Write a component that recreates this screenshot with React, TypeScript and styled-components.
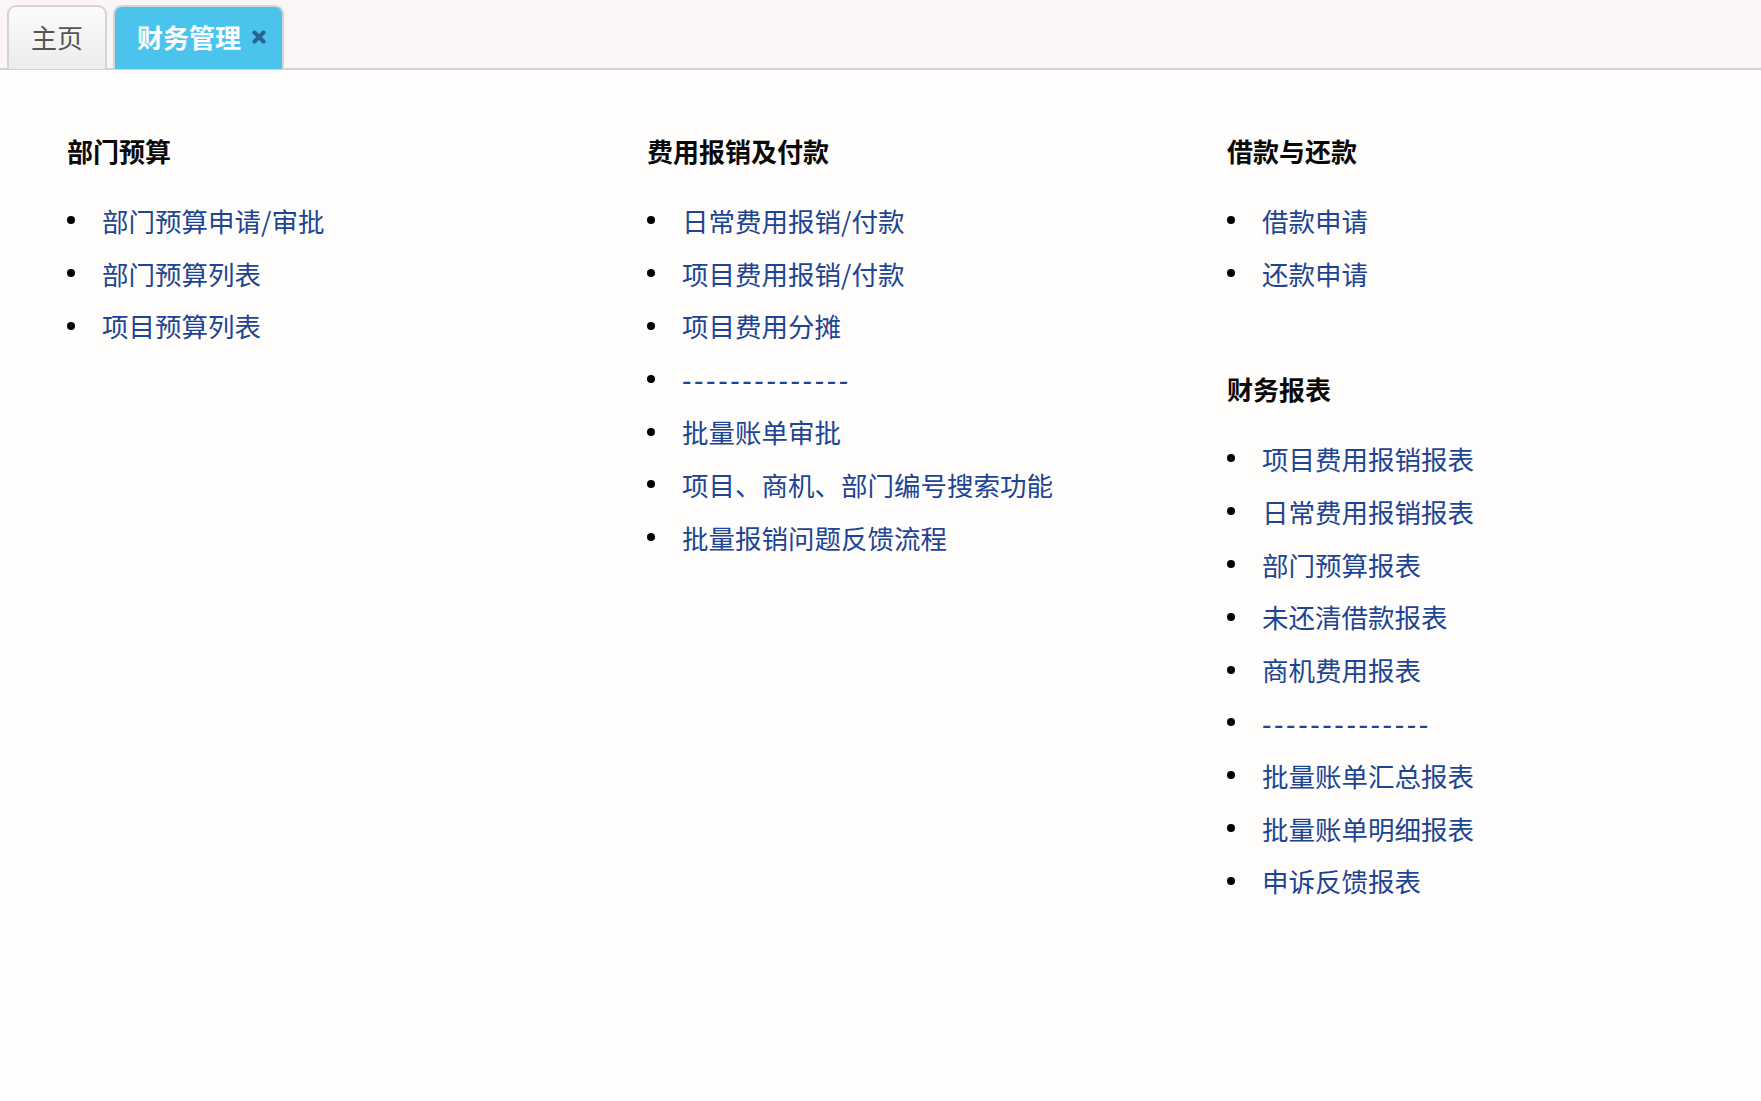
import React from "react";
import styled, { createGlobalStyle } from "styled-components";

const GlobalStyle = createGlobalStyle`
  html, body {
    margin: 0;
    padding: 0;
    background: #fffdfc;
    font-family: "Noto Sans CJK SC", "Noto Sans", sans-serif;
  }
`;

const Page = styled.div`
  min-height: 1101px;
  background: #fffdfc;
`;

const TabBar = styled.div`
  display: flex;
  align-items: flex-end;
  gap: 6px;
  height: 68px;
  padding-left: 7px;
  background: #fbf5f5;
  border-bottom: 2px solid #d2d2d2;
  box-sizing: content-box;
`;

const Tab = styled.div<{ $active?: boolean }>`
  display: flex;
  align-items: center;
  box-sizing: border-box;
  height: 64px;
  margin-bottom: -1px;
  padding: 0 ${(p) => (p.$active ? "16px" : "22px")} 2px 22px;
  border: 2px solid #d4d4d4;
  border-bottom: none;
  border-radius: 9px 9px 0 0;
  background: ${(p) =>
    p.$active ? "#4bc4ed" : "linear-gradient(#fbfbfb, #ececec)"};
  color: ${(p) => (p.$active ? "#ffffff" : "#555555")};
  font-size: 26px;
  font-weight: ${(p) => (p.$active ? 700 : 400)};
  line-height: 1;
`;

const CloseIcon = styled.svg`
  margin-left: 11px;
  width: 14px;
  height: 14px;
`;

const Content = styled.div`
  display: grid;
  grid-template-columns: repeat(3, 580px);
  padding: 61px 0 0 67px;
`;

const Column = styled.div`
  display: flex;
  flex-direction: column;
  gap: 69.5px;
`;

const Section = styled.section``;

const Heading = styled.h3`
  margin: 0 0 23px;
  font-size: 26px;
  line-height: 40px;
  font-weight: 700;
  color: #0a0a0a;
`;

const List = styled.ul`
  margin: 0;
  padding: 0;
  list-style: none;
`;

const Item = styled.li`
  display: flex;
  align-items: center;
  height: 52.8px;
  &::before {
    content: "";
    width: 8px;
    height: 8px;
    border-radius: 50%;
    background: #000;
    margin-right: 27px;
    flex: none;
  }
`;

const Link = styled.a<{ $dash?: boolean }>`
  color: #1d4592;
  font-size: 26.5px;
  text-decoration: none;
  letter-spacing: ${(p) => (p.$dash ? "2.6px" : "0")};
  font-weight: ${(p) => (p.$dash ? 500 : 400)};
`;

const sections: { title: string; items: string[] }[][] = [
  [
    {
      title: "部门预算",
      items: ["部门预算申请/审批", "部门预算列表", "项目预算列表"],
    },
  ],
  [
    {
      title: "费用报销及付款",
      items: [
        "日常费用报销/付款",
        "项目费用报销/付款",
        "项目费用分摊",
        "--------------",
        "批量账单审批",
        "项目、商机、部门编号搜索功能",
        "批量报销问题反馈流程",
      ],
    },
  ],
  [
    { title: "借款与还款", items: ["借款申请", "还款申请"] },
    {
      title: "财务报表",
      items: [
        "项目费用报销报表",
        "日常费用报销报表",
        "部门预算报表",
        "未还清借款报表",
        "商机费用报表",
        "--------------",
        "批量账单汇总报表",
        "批量账单明细报表",
        "申诉反馈报表",
      ],
    },
  ],
];

export default function App() {
  return (
    <Page>
      <GlobalStyle />
      <TabBar>
        <Tab>主页</Tab>
        <Tab $active>
          财务管理
          <CloseIcon viewBox="0 0 14 14">
            <path
              d="M2.5 2.5 L11.5 11.5 M11.5 2.5 L2.5 11.5"
              stroke="#2a6591"
              strokeWidth="4"
              strokeLinecap="round"
            />
          </CloseIcon>
        </Tab>
      </TabBar>
      <Content>
        {sections.map((col, i) => (
          <Column key={i}>
            {col.map((s) => (
              <Section key={s.title}>
                <Heading>{s.title}</Heading>
                <List>
                  {s.items.map((it, j) => (
                    <Item key={j}>
                      <Link href="#" $dash={it.startsWith("-")}>
                        {it}
                      </Link>
                    </Item>
                  ))}
                </List>
              </Section>
            ))}
          </Column>
        ))}
      </Content>
    </Page>
  );
}
